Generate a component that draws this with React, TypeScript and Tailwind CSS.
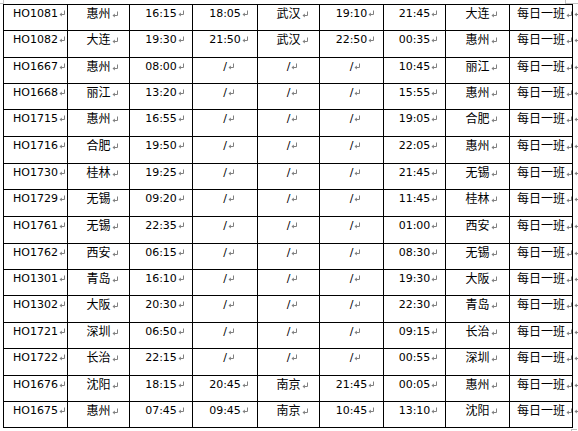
const rows: string[][] = [
  ["HO1081", "惠州", "16:15", "18:05", "武汉", "19:10", "21:45", "大连", "每日一班"],
  ["HO1082", "大连", "19:30", "21:50", "武汉", "22:50", "00:35", "惠州", "每日一班"],
  ["HO1667", "惠州", "08:00", "/", "/", "/", "10:45", "丽江", "每日一班"],
  ["HO1668", "丽江", "13:20", "/", "/", "/", "15:55", "惠州", "每日一班"],
  ["HO1715", "惠州", "16:55", "/", "/", "/", "19:05", "合肥", "每日一班"],
  ["HO1716", "合肥", "19:50", "/", "/", "/", "22:05", "惠州", "每日一班"],
  ["HO1730", "桂林", "19:25", "/", "/", "/", "21:45", "无锡", "每日一班"],
  ["HO1729", "无锡", "09:20", "/", "/", "/", "11:45", "桂林", "每日一班"],
  ["HO1761", "无锡", "22:35", "/", "/", "/", "01:00", "西安", "每日一班"],
  ["HO1762", "西安", "06:15", "/", "/", "/", "08:30", "无锡", "每日一班"],
  ["HO1301", "青岛", "16:10", "/", "/", "/", "19:30", "大阪", "每日一班"],
  ["HO1302", "大阪", "20:30", "/", "/", "/", "22:30", "青岛", "每日一班"],
  ["HO1721", "深圳", "06:50", "/", "/", "/", "09:15", "长治", "每日一班"],
  ["HO1722", "长治", "22:15", "/", "/", "/", "00:55", "深圳", "每日一班"],
  ["HO1676", "沈阳", "18:15", "20:45", "南京", "21:45", "00:05", "惠州", "每日一班"],
  ["HO1675", "惠州", "07:45", "09:45", "南京", "10:45", "13:10", "沈阳", "每日一班"],
];

// word paragraph mark, zero width so the text stays centred
function Mark() {
  return (
    <span className="inline-block w-0">
      <svg width="7" height="7" viewBox="0 0 7 7" className="block ml-[1px]">
        <path d="M5.5 0.5 V4.5 H1.5" fill="none" stroke="#808080" strokeWidth="1" />
        <path d="M0.5 4.5 L2.8 2.6 V6.4 Z" fill="#808080" />
      </svg>
    </span>
  );
}

function Cell({ text, last }: { text: string; last: boolean }) {
  const cjk = /[^\x00-\x7f]/.test(text);
  return (
    <div className="relative bg-white flex justify-center pt-[2px]">
      <span className={"leading-[14px] whitespace-nowrap " + (cjk ? "text-[12px]" : "text-[11px]")}>
        {text}
        <Mark />
      </span>
      {last ? (
        <span className="absolute left-[calc(100%+1px)] top-[2px] leading-[14px] text-[11px]">
          <Mark />
        </span>
      ) : null}
    </div>
  );
}

export default function App() {
  return (
    <div
      className="relative w-[578px] h-[431px] overflow-hidden bg-white text-black"
      style={{ fontFamily: '"DejaVu Sans", "Noto Sans CJK SC", sans-serif' }}
    >
      {/* crop marks */}
      <div className="absolute left-0 top-0 w-[4px] h-[4px] border-r border-b border-[#c0c0c0]" />
      <div className="absolute left-[565px] top-0 w-[13px] h-[4px] border-l border-b border-[#c0c0c0]" />
      <div className="absolute left-[571px] top-[429px] w-[6px] h-[2px] border-l border-t border-[#c0c0c0]" />

      <div className="ml-[3px] mt-[4px] w-[570px] grid grid-cols-[63px_61px_62px_64px_61px_63px_61px_63px_62px] grid-rows-[25px_26px_25px_25px_26px_26px_25px_26px_26px_25px_25px_26px_25px_26px_25px_25px] gap-px p-px bg-black">
        {rows.map((r, i) =>
          r.map((t, j) => <Cell key={i + "-" + j} text={t} last={j === 8} />)
        )}
      </div>
    </div>
  );
}
